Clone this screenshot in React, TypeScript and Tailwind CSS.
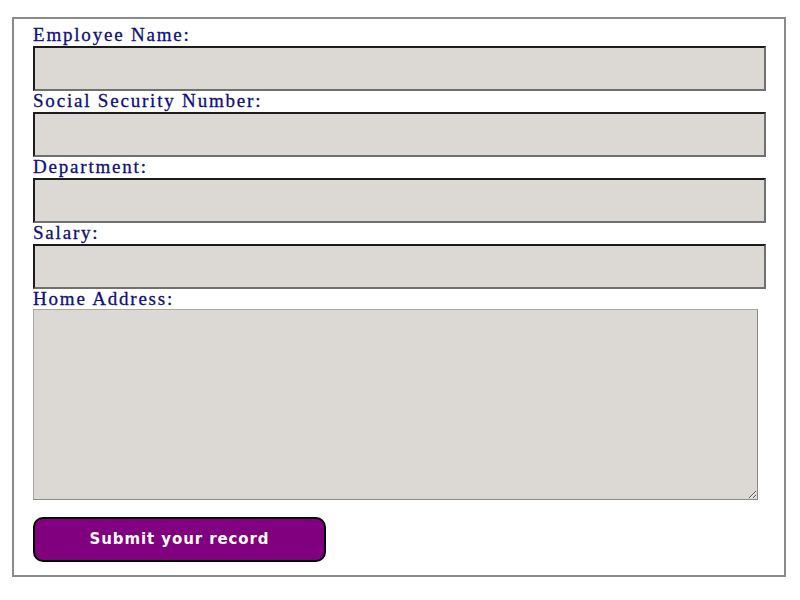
import React from "react";

const FIELDS = ["Employee Name:", "Social Security Number:", "Department:", "Salary:"];

const App: React.FC = () => {
    return (
        <div className="w-[800px] h-[600px] bg-white pt-[17px] pl-[12px]">
            <div className="w-[774px] h-[560px] border-2 border-[#8a8a8a] pt-[6px] pl-[19px]">
                <form className="flex flex-col" onSubmit={(e) => e.preventDefault()}>
                    {FIELDS.map((label) => (
                        <div key={label} className="flex flex-col">
                            <label className="h-[21px] text-[19px] leading-[20px] text-[#10107a] font-['Liberation_Serif',serif] tracking-[1.8px] [-webkit-text-stroke:0.3px_#10107a]">
                                {label}
                            </label>
                            <input
                                type="text"
                                className="w-[733px] h-[45px] bg-[#dcd8d4] border-2 border-t-[#1c1c1c] border-l-[#1c1c1c] border-b-[#707070] border-r-[#707070] outline-none"
                            />
                        </div>
                    ))}
                    <label className="h-[20px] text-[19px] leading-[20px] text-[#10107a] font-['Liberation_Serif',serif] tracking-[1.8px] [-webkit-text-stroke:0.3px_#10107a]">
                        Home Address:
                    </label>
                    <textarea className="block w-[725px] h-[191px] bg-[#dcd8d4] border border-t-[#a8a8a8] border-l-[#a8a8a8] border-b-[#8a8a8a] border-r-[#8a8a8a] outline-none resize" />
                    <button
                        type="submit"
                        className="mt-[17px] w-[293px] h-[45px] bg-[#800080] border-2 border-black rounded-[10px] text-white text-[15px] font-bold font-['DejaVu_Sans',sans-serif] tracking-[0.9px]"
                    >
                        Submit your record
                    </button>
                </form>
            </div>
        </div>
    );
};

export default App;
